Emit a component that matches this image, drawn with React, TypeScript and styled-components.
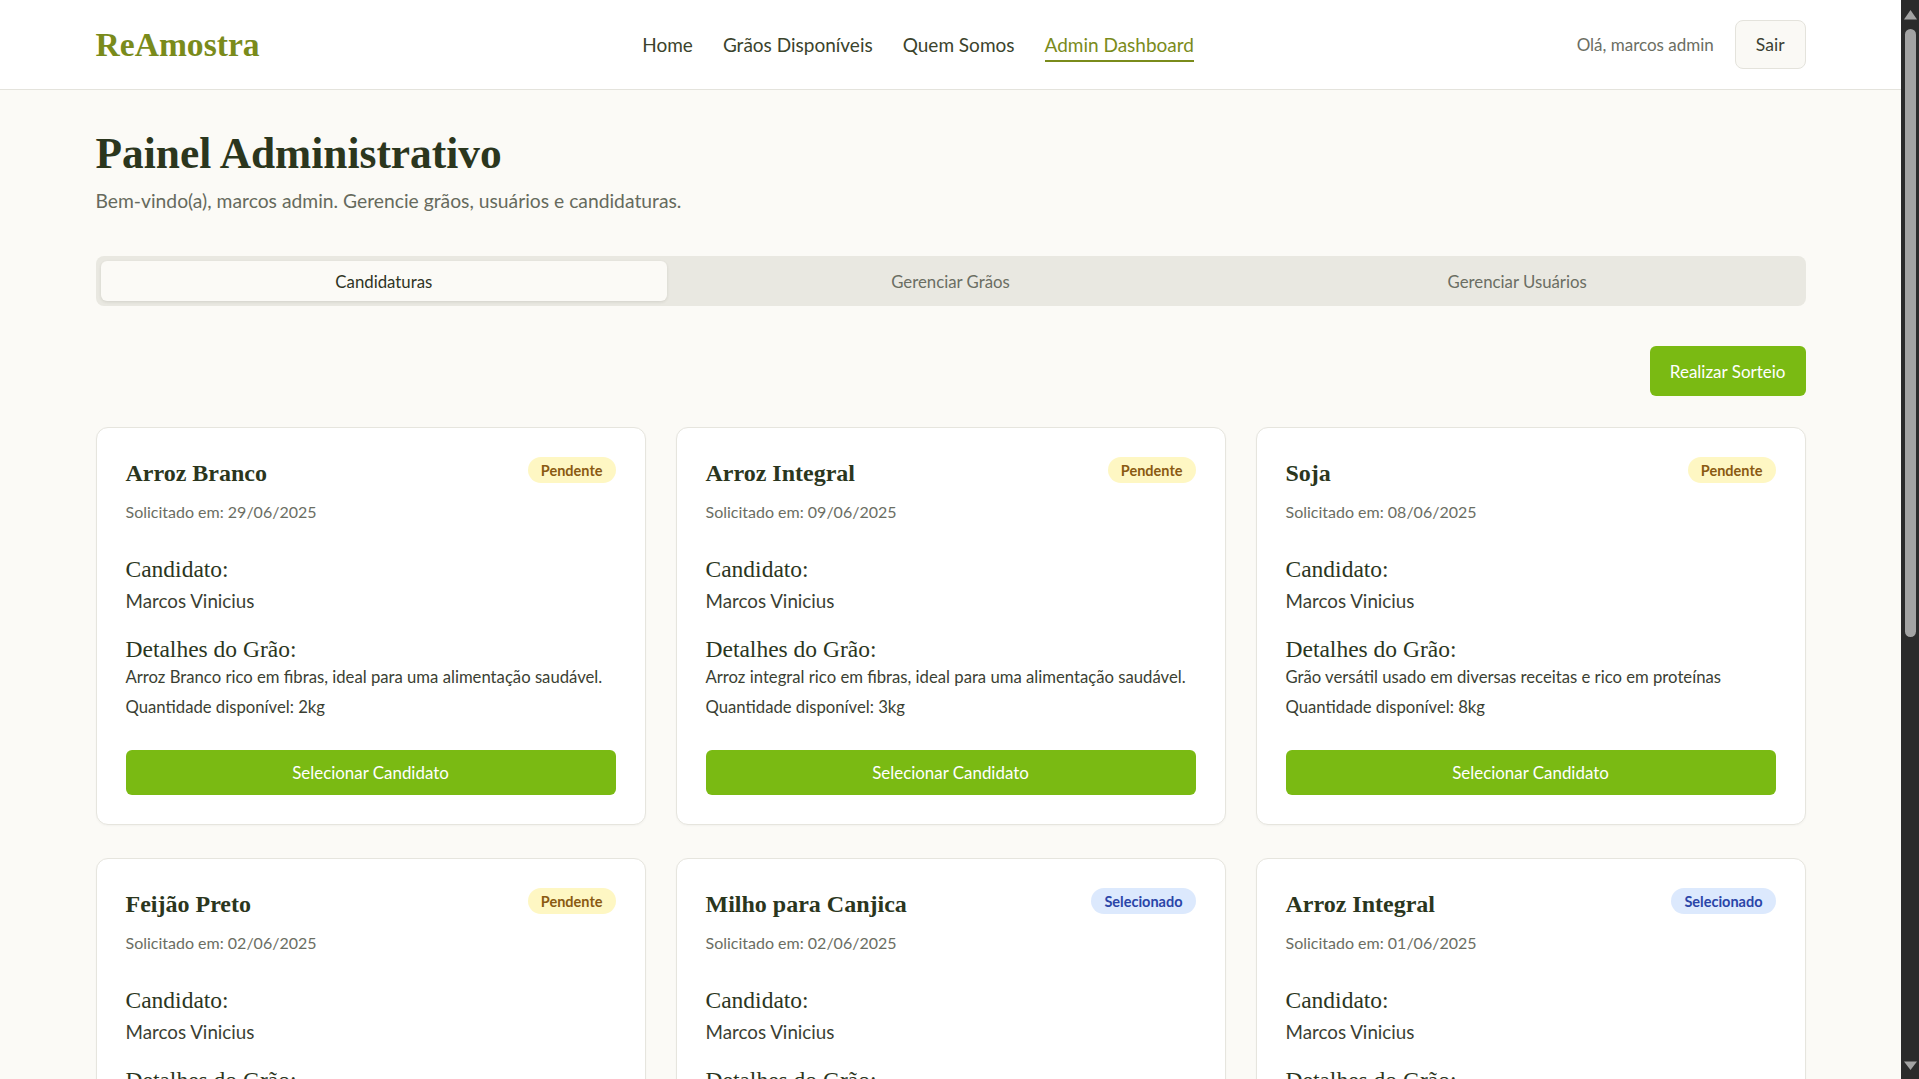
import React from "react";
import styled, { createGlobalStyle, css } from "styled-components";

const GlobalStyle = createGlobalStyle`
  * { box-sizing: border-box; }
  html, body { margin: 0; padding: 0; }
  body {
    background: #fbfaf6;
    font-family: "Lato", "Noto Sans", sans-serif;
    color: #3b3f33;
  }
`;

const serif = `"Liberation Serif", "DejaVu Serif", serif`;

// page content leaves room for the dark scroll rail on the right
const Page = styled.div`
  padding-right: 18px;
`;

const ScrollRail = styled.div`
  position: fixed;
  top: 0;
  right: 0;
  bottom: 0;
  width: 18px;
  background: #2b2b2b;
  display: flex;
  flex-direction: column;
  align-items: center;
`;

const RailArrow = styled.svg`
  flex: none;
  display: block;
`;

const RailThumb = styled.div`
  margin-top: 5px;
  width: 11px;
  height: 608px;
  border-radius: 6px;
  background: #a3a3a3;
`;

const RailFill = styled.div`
  flex: 1;
`;

const Container = styled.div`
  max-width: 1710px;
  margin: 0 auto;
`;

const Header = styled.header`
  background: #ffffff;
  border-bottom: 1px solid #e4e3dc;
`;

const HeaderInner = styled(Container)`
  height: 89px;
  display: flex;
  align-items: center;
  justify-content: space-between;
`;

const Logo = styled.a`
  font-family: ${serif};
  font-size: 33.6px;
  font-weight: 700;
  color: #7a8b1b;
  text-decoration: none;
`;

const Nav = styled.nav`
  display: flex;
  gap: 30px;
`;

const NavLink = styled.a<{ $active?: boolean }>`
  position: relative;
  font-size: 19px;
  line-height: 24px;
  text-decoration: none;
  color: ${(p) => (p.$active ? "#7a8b1b" : "#3b432c")};
  ${(p) =>
    p.$active &&
    css`
      &::after {
        content: "";
        position: absolute;
        left: 0;
        right: 0;
        bottom: -5px;
        height: 2px;
        background: #7a8b1b;
      }
    `}
`;

const UserArea = styled.div`
  display: flex;
  align-items: center;
  gap: 21px;
`;

const Greeting = styled.span`
  font-size: 17px;
  color: #6b6e63;
`;

const GhostButton = styled.button`
  height: 49px;
  padding: 0 20px;
  font-family: inherit;
  font-size: 17.5px;
  color: #3b3f33;
  background: #faf9f5;
  border: 1px solid #e4e3dc;
  border-radius: 8px;
`;

const Main = styled(Container)`
  padding: 37px 0 64px;
`;

const Title = styled.h1`
  margin: 0;
  font-family: ${serif};
  font-size: 43.4px;
  line-height: 52px;
  font-weight: 700;
  color: #2b361d;
`;

const Subtitle = styled.p`
  margin: 8px 0 0;
  font-size: 19.3px;
  line-height: 28px;
  color: #666a5d;
`;

const TabBar = styled.div`
  margin-top: 41px;
  display: grid;
  grid-template-columns: repeat(3, 1fr);
  padding: 5px;
  background: #e9e8e1;
  border-radius: 8px;
`;

const Tab = styled.button<{ $active?: boolean }>`
  height: 40px;
  border: 0;
  border-radius: 6px;
  font-family: inherit;
  font-size: 16.8px;
  color: ${(p) => (p.$active ? "#2f3424" : "#6b6e63")};
  background: ${(p) => (p.$active ? "#fbfaf6" : "transparent")};
  box-shadow: ${(p) => (p.$active ? "0 1px 3px rgba(60, 60, 40, 0.12)" : "none")};
`;

const Toolbar = styled.div`
  margin-top: 40px;
  display: flex;
  justify-content: flex-end;
`;

const PrimaryButton = styled.button<{ $block?: boolean }>`
  height: ${(p) => (p.$block ? "45px" : "50px")};
  width: ${(p) => (p.$block ? "100%" : "auto")};
  padding: 0 20px;
  border: 0;
  border-radius: 6px;
  background: #7aba13;
  color: #ffffff;
  font-family: inherit;
  font-size: ${(p) => (p.$block ? "16.9px" : "17px")};
`;

const Grid = styled.div`
  margin-top: 31px;
  display: grid;
  grid-template-columns: repeat(3, 1fr);
  column-gap: 30px;
  row-gap: 33px;
`;

const Card = styled.div`
  background: #ffffff;
  border: 1px solid #e6e5de;
  border-radius: 12px;
  padding: 29px;
  box-shadow: 0 1px 2px rgba(60, 60, 40, 0.04);
`;

const CardHead = styled.div`
  display: flex;
  justify-content: space-between;
  align-items: flex-start;
`;

const CardTitle = styled.h3`
  margin: -2px 0 0;
  font-family: ${serif};
  font-size: 24px;
  line-height: 36px;
  font-weight: 700;
  color: #2b361d;
`;

const Badge = styled.span<{ $tone: "pending" | "selected" }>`
  height: 26px;
  padding: 0 13px;
  display: inline-flex;
  align-items: center;
  border-radius: 13px;
  font-size: 14.5px;
  font-weight: 700;
  background: ${(p) => (p.$tone === "pending" ? "#fef7c3" : "#dce9fd")};
  color: ${(p) => (p.$tone === "pending" ? "#8a5a12" : "#2a45a8")};
`;

const DateText = styled.p`
  margin: 10px 0 0;
  font-size: 16px;
  line-height: 22px;
  color: #6b6e63;
`;

const Section = styled.div<{ $gap: number }>`
  margin-top: ${(p) => p.$gap}px;
`;

const Label = styled.h4`
  margin: 0;
  font-family: ${serif};
  font-size: 23.5px;
  line-height: 30px;
  font-weight: 400;
  color: #2b361d;
`;

const Value = styled.p`
  margin: 4px 0 0;
  font-size: 18.8px;
  line-height: 26px;
  color: #3b3f33;
`;

const Detail = styled.p`
  margin: 6px 0 0;
  font-size: 16.7px;
  line-height: 24px;
  color: #3b3f33;
  &:first-of-type {
    margin-top: 1px;
  }
`;

const CardAction = styled.div`
  margin-top: 31px;
`;

const Footer = styled.footer`
  background: #f1f0ea;
  border-top: 1px solid #e4e3dc;
`;

const FooterInner = styled(Container)`
  height: 100px;
  display: flex;
  align-items: center;
  justify-content: center;
  font-size: 15px;
  color: #6b6e63;
`;

type Candidatura = {
  grain: string;
  date: string;
  status: "pending" | "selected";
  description: string;
  qty: string;
};

const candidaturas: Candidatura[] = [
  {
    grain: "Arroz Branco",
    date: "29/06/2025",
    status: "pending",
    description: "Arroz Branco rico em fibras, ideal para uma alimentação saudável.",
    qty: "2kg",
  },
  {
    grain: "Arroz Integral",
    date: "09/06/2025",
    status: "pending",
    description: "Arroz integral rico em fibras, ideal para uma alimentação saudável.",
    qty: "3kg",
  },
  {
    grain: "Soja",
    date: "08/06/2025",
    status: "pending",
    description: "Grão versátil usado em diversas receitas e rico em proteínas",
    qty: "8kg",
  },
  {
    grain: "Feijão Preto",
    date: "02/06/2025",
    status: "pending",
    description: "Feijão preto de ótima qualidade, ideal para feijoada.",
    qty: "5kg",
  },
  {
    grain: "Milho para Canjica",
    date: "02/06/2025",
    status: "selected",
    description: "Milho branco selecionado, perfeito para canjica.",
    qty: "4kg",
  },
  {
    grain: "Arroz Integral",
    date: "01/06/2025",
    status: "selected",
    description: "Arroz integral rico em fibras, ideal para uma alimentação saudável.",
    qty: "3kg",
  },
  {
    grain: "Feijão Carioca",
    date: "28/05/2025",
    status: "selected",
    description: "Feijão carioca macio e saboroso para o dia a dia.",
    qty: "6kg",
  },
  {
    grain: "Lentilha",
    date: "25/05/2025",
    status: "selected",
    description: "Leguminosa nutritiva, fonte de ferro e proteínas.",
    qty: "2kg",
  },
  {
    grain: "Grão-de-Bico",
    date: "20/05/2025",
    status: "selected",
    description: "Grão versátil para saladas, pastas e ensopados.",
    qty: "3kg",
  },
];

function CandidaturaCard({ item }: { item: Candidatura }) {
  return (
    <Card>
      <CardHead>
        <CardTitle>{item.grain}</CardTitle>
        <Badge $tone={item.status}>
          {item.status === "pending" ? "Pendente" : "Selecionado"}
        </Badge>
      </CardHead>
      <DateText>Solicitado em: {item.date}</DateText>
      <Section $gap={31}>
        <Label>Candidato:</Label>
        <Value>Marcos Vinicius</Value>
      </Section>
      <Section $gap={20}>
        <Label>Detalhes do Grão:</Label>
        <Detail>{item.description}</Detail>
        <Detail>Quantidade disponível: {item.qty}</Detail>
      </Section>
      {item.status === "pending" && (
        <CardAction>
          <PrimaryButton $block>Selecionar Candidato</PrimaryButton>
        </CardAction>
      )}
    </Card>
  );
}

export default function App() {
  return (
    <>
      <GlobalStyle />
      <Page>
        <Header>
          <HeaderInner>
            <Logo href="#">ReAmostra</Logo>
            <Nav>
              <NavLink href="#">Home</NavLink>
              <NavLink href="#">Grãos Disponíveis</NavLink>
              <NavLink href="#">Quem Somos</NavLink>
              <NavLink href="#" $active>
                Admin Dashboard
              </NavLink>
            </Nav>
            <UserArea>
              <Greeting>Olá, marcos admin</Greeting>
              <GhostButton>Sair</GhostButton>
            </UserArea>
          </HeaderInner>
        </Header>
        <Main>
          <Title>Painel Administrativo</Title>
          <Subtitle>
            Bem-vindo(a), marcos admin. Gerencie grãos, usuários e candidaturas.
          </Subtitle>
          <TabBar>
            <Tab $active>Candidaturas</Tab>
            <Tab>Gerenciar Grãos</Tab>
            <Tab>Gerenciar Usuários</Tab>
          </TabBar>
          <Toolbar>
            <PrimaryButton>Realizar Sorteio</PrimaryButton>
          </Toolbar>
          <Grid>
            {candidaturas.map((c, i) => (
              <CandidaturaCard key={i} item={c} />
            ))}
          </Grid>
        </Main>
        <Footer>
          <FooterInner>© 2025 ReAmostra. Todos os direitos reservados.</FooterInner>
        </Footer>
      </Page>
      <ScrollRail>
        <RailArrow width="18" height="24" viewBox="0 0 18 24">
          <path d="M3 19.5 L9.5 10 L16 19.5 Z" fill="#a3a3a3" />
        </RailArrow>
        <RailThumb />
        <RailFill />
        <RailArrow width="18" height="24" viewBox="0 0 18 24">
          <path d="M3 6.5 L16 6.5 L9.5 15 Z" fill="#a3a3a3" />
        </RailArrow>
      </ScrollRail>
    </>
  );
}
